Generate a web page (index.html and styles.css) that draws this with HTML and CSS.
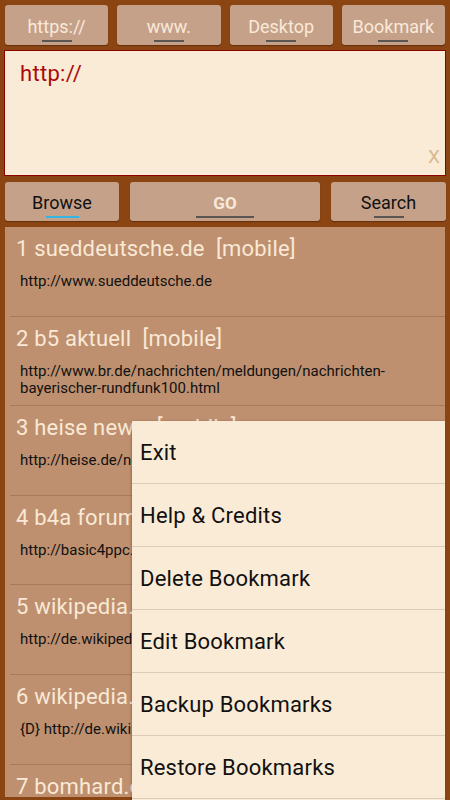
FILE: index.html
```html
<!DOCTYPE html>
<html>
<head>
    <title>Bookmarks</title>
    <meta name="viewport" content="width=device-width, initial-scale=1.0">
    <link rel="stylesheet" href="styles.css">
</head>
<body>
    <div class="toolbar">
        <button class="btn light"><span>https://</span><i class="bar"></i></button>
        <button class="btn light"><span>www.</span><i class="bar"></i></button>
        <button class="btn light"><span>Desktop</span><i class="bar"></i></button>
        <button class="btn light"><span>Bookmark</span><i class="bar"></i></button>
    </div>

    <div class="url-box">
        <div class="url-text">http://</div>
        <div class="clear">X</div>
    </div>

    <div class="actions">
        <button class="btn"><span>Browse</span><i class="bar blue"></i></button>
        <button class="btn light go"><span>GO</span><i class="bar wide"></i></button>
        <button class="btn"><span>Search</span><i class="bar"></i></button>
    </div>

    <div class="list">
        <div class="row">
            <div class="title">1 sueddeutsche.de&nbsp; [mobile]</div>
            <div class="link">http://www.sueddeutsche.de</div>
        </div>
        <div class="row">
            <div class="title">2 b5 aktuell&nbsp; [mobile]</div>
            <div class="link">http://www.br.de/nachrichten/meldungen/nachrichten-bayerischer-rundfunk100.html</div>
        </div>
        <div class="row">
            <div class="title">3 heise news&nbsp; [mobile]</div>
            <div class="link">http://heise.de/newsticker/mobile</div>
        </div>
        <div class="row">
            <div class="title">4 b4a forum</div>
            <div class="link">http://basic4ppc.com/android/forum</div>
        </div>
        <div class="row">
            <div class="title">5 wikipedia.de</div>
            <div class="link">http://de.wikipedia.org</div>
        </div>
        <div class="row">
            <div class="title">6 wikipedia.de</div>
            <div class="link">{D} http://de.wikipedia.org</div>
        </div>
        <div class="row">
            <div class="title">7 bomhard.de</div>
            <div class="link">http://www.bomhard.de</div>
        </div>
    </div>

    <!-- options menu, open over the list -->
    <div class="menu">
        <div class="item">Exit</div>
        <div class="item">Help &amp; Credits</div>
        <div class="item">Delete Bookmark</div>
        <div class="item">Edit Bookmark</div>
        <div class="item">Backup Bookmarks</div>
        <div class="item">Restore Bookmarks</div>
    </div>
</body>
</html>
```

FILE: styles.css
```css
html, body {
    margin: 0;
    height: 800px;
    overflow: hidden;
}
body {
    position: relative;
    background: #8b4513;
    font-family: Roboto, "Noto Sans", sans-serif;
}
.toolbar {
    display: flex;
    gap: 9px;
    padding: 5px 5px 0 5px;
    height: 40px;
}
.btn {
    flex: 1;
    position: relative;
    display: flex;
    align-items: center;
    justify-content: center;
    background: #c5a18a;
    border: none;
    border-radius: 3px;
    box-shadow: 0 1px 1px rgba(60, 20, 0, 0.5);
    padding: 2px 0 0 0;
    font-family: inherit;
    font-size: 18px;
    color: #111;
}
.btn.light {
    color: #f9e9d9;
}
.btn.go {
    font-weight: bold;
    font-size: 17px;
}
.bar {
    position: absolute;
    bottom: 3px;
    left: 50%;
    width: 30px;
    height: 2px;
    margin-left: -15px;
    background: #5a5550;
}
.bar.blue {
    width: 33px;
    margin-left: -16px;
    background: #33b5e5;
}
.bar.wide {
    width: 58px;
    margin-left: -29px;
}
.url-box {
    position: relative;
    margin: 5px 4px 0 4px;
    height: 124px;
    background: #faebd7;
    border: 1px solid #8b0000;
}
.url-text {
    padding: 10px 0 0 15px;
    font-size: 22px;
    letter-spacing: 0.3px;
    color: #aa0a0a;
}
.clear {
    position: absolute;
    right: 5px;
    bottom: 7px;
    font-size: 19px;
    color: #d7b894;
}
.actions {
    display: grid;
    grid-template-columns: 114px 190px 115px;
    gap: 11px;
    margin-top: 6px;
    padding: 0 5px;
    height: 39px;
}
.list {
    margin: 6px 5px 0 5px;
    height: 570px;
    overflow: hidden;
    background: #be906f;
}
.row {
    height: 88.6px;
    margin-left: 5px;
    border-bottom: 1px solid #a97a5a;
}
.title {
    padding: 8px 0 0 6px;
    line-height: 28px;
    font-size: 22px;
    letter-spacing: 0.2px;
    color: #f9e9d6;
    white-space: nowrap;
}
.link {
    margin-top: 10px;
    padding: 0 10px 0 10px;
    line-height: 17px;
    font-size: 15px;
    color: #111;
}
.menu {
    position: absolute;
    left: 132px;
    right: 5px;
    top: 421px;
    bottom: 0;
    background: #faebd7;
    box-shadow: -1px 0 2px rgba(60, 20, 0, 0.25);
}
.item {
    height: 62px;
    padding-left: 8px;
    line-height: 64px;
    font-size: 22px;
    letter-spacing: 0.2px;
    color: #111;
    border-bottom: 1px solid #ddcbb8;
}
```
